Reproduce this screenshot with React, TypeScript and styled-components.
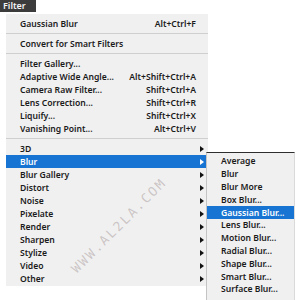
import React from "react";
import styled, { createGlobalStyle } from "styled-components";

const Global = createGlobalStyle`
  html, body { margin: 0; padding: 0; background: #ffffff; }
  body { font-family: "Noto Sans", "Liberation Sans", sans-serif; }
`;

const Screen = styled.div`
  position: relative;
  width: 300px;
  height: 300px;
  overflow: hidden;
  background: #ffffff;
  font-family: "Noto Sans", "Liberation Sans", sans-serif;
  font-size: 8.6px;
  font-weight: 600;
  color: #1b1b1b;
`;

const MenuTitle = styled.div`
  width: 36px;
  height: 12px;
  background: #3c3c3c;
  color: #f4f4f4;
  font-weight: 600;
  font-size: 9px;
  line-height: 12px;
  padding-left: 3px;
  box-sizing: border-box;
`;

const Panel = styled.div`
  margin: 2px 0 0 6px;
  width: 202px;
  background: #f0f0f0;
  padding: 3px 0 1px;
  display: flex;
  flex-direction: column;
`;

const Row = styled.div<{ $active?: boolean }>`
  height: 13px;
  display: grid;
  grid-template-columns: 1fr auto 12px;
  align-items: center;
  padding-left: 14px;
  background: ${(p) => (p.$active ? "#1874d2" : "transparent")};
  color: ${(p) => (p.$active ? "#ffffff" : "#1b1b1b")};
  white-space: nowrap;
`;

const Shortcut = styled.span`
  text-align: right;
`;

const Arrow = styled.span<{ $active?: boolean }>`
  justify-self: center;
  width: 0;
  height: 0;
  border-top: 3px solid transparent;
  border-bottom: 3px solid transparent;
  border-left: 4px solid ${(p) => (p.$active ? "#ffffff" : "#111111")};
`;

const Separator = styled.div`
  height: 7px;
  display: flex;
  align-items: center;
  &::after {
    content: "";
    flex: 1;
    height: 1px;
    background: #cfcfcf;
  }
`;

const SubPanel = styled.div`
  position: absolute;
  left: 206px;
  top: 152px;
  width: 87px;
  background: #f0f0f0;
  border-top: 1px solid #2e2e2e;
  border-left: 1px solid #c4c4c4;
  border-right: 1px solid #dadada;
  padding: 2px 0 4px;
  display: flex;
  flex-direction: column;
`;

const SubRow = styled.div<{ $active?: boolean }>`
  height: 12.8px;
  display: flex;
  align-items: center;
  padding-left: 14px;
  background: ${(p) => (p.$active ? "#1874d2" : "transparent")};
  color: ${(p) => (p.$active ? "#ffffff" : "#1b1b1b")};
  white-space: nowrap;
`;

const Watermark = styled.div`
  position: absolute;
  left: 74px;
  top: 264px;
  height: 14px;
  line-height: 14px;
  transform: rotate(-45deg);
  transform-origin: left center;
  font-family: "DejaVu Sans Mono", monospace;
  font-size: 13px;
  font-weight: 400;
  letter-spacing: 2px;
  color: rgba(150, 135, 135, 0.42);
  white-space: nowrap;
  pointer-events: none;
`;

type Item =
  | { kind: "sep" }
  | { kind: "item"; label: string; shortcut?: string; sub?: boolean; active?: boolean };

const items: Item[] = [
  { kind: "item", label: "Gaussian Blur", shortcut: "Alt+Ctrl+F" },
  { kind: "sep" },
  { kind: "item", label: "Convert for Smart Filters" },
  { kind: "sep" },
  { kind: "item", label: "Filter Gallery..." },
  { kind: "item", label: "Adaptive Wide Angle...", shortcut: "Alt+Shift+Ctrl+A" },
  { kind: "item", label: "Camera Raw Filter...", shortcut: "Shift+Ctrl+A" },
  { kind: "item", label: "Lens Correction...", shortcut: "Shift+Ctrl+R" },
  { kind: "item", label: "Liquify...", shortcut: "Shift+Ctrl+X" },
  { kind: "item", label: "Vanishing Point...", shortcut: "Alt+Ctrl+V" },
  { kind: "sep" },
  { kind: "item", label: "3D", sub: true },
  { kind: "item", label: "Blur", sub: true, active: true },
  { kind: "item", label: "Blur Gallery", sub: true },
  { kind: "item", label: "Distort", sub: true },
  { kind: "item", label: "Noise", sub: true },
  { kind: "item", label: "Pixelate", sub: true },
  { kind: "item", label: "Render", sub: true },
  { kind: "item", label: "Sharpen", sub: true },
  { kind: "item", label: "Stylize", sub: true },
  { kind: "item", label: "Video", sub: true },
  { kind: "item", label: "Other", sub: true },
];

const subItems = [
  "Average",
  "Blur",
  "Blur More",
  "Box Blur...",
  "Gaussian Blur...",
  "Lens Blur...",
  "Motion Blur...",
  "Radial Blur...",
  "Shape Blur...",
  "Smart Blur...",
  "Surface Blur...",
];

export default function App() {
  return (
    <Screen>
      <Global />
      <MenuTitle>Filter</MenuTitle>
      <Panel>
        {items.map((it, i) =>
          it.kind === "sep" ? (
            <Separator key={i} />
          ) : (
            <Row key={i} $active={it.active}>
              <span>{it.label}</span>
              <Shortcut>{it.shortcut ?? ""}</Shortcut>
              {it.sub ? <Arrow $active={it.active} /> : <span />}
            </Row>
          )
        )}
      </Panel>
      <Watermark>WWW.AL2LA.COM</Watermark>
      <SubPanel>
        {subItems.map((s) => (
          <SubRow key={s} $active={s === "Gaussian Blur..."}>
            {s}
          </SubRow>
        ))}
      </SubPanel>
    </Screen>
  );
}
